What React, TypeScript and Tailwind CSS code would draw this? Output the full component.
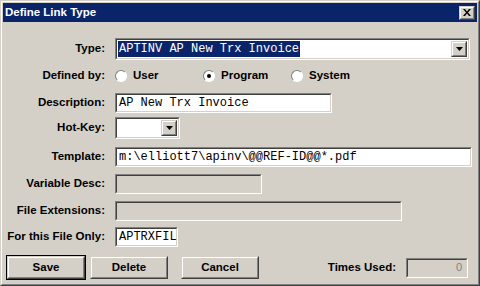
import React from 'react'

const sans = { fontFamily: '"Liberation Sans", Arial, sans-serif' }
const mono = { fontFamily: '"Liberation Mono", "Courier New", monospace' }

// classic 3d edges
const sunkenOuter = 'border border-t-[#808080] border-l-[#808080] border-r-white border-b-white'
const sunkenInner = 'border border-t-[#404040] border-l-[#404040] border-r-[#d4d0c8] border-b-[#d4d0c8]'
const raisedOuter = 'border border-t-[#d4d0c8] border-l-[#d4d0c8] border-r-[#404040] border-b-[#404040]'
const raisedInner = 'border border-t-white border-l-white border-r-[#808080] border-b-[#808080]'

function Field({ width, height = 20, disabled, children, className = '' }: { width: number; height?: number; disabled?: boolean; children?: React.ReactNode; className?: string }) {
  return (
    <div className={sunkenOuter} style={{ width, height }}>
      <div className={`${sunkenInner} h-full flex items-center ${disabled ? 'bg-[#d4d0c8]' : 'bg-white'} ${className}`}>
        {children}
      </div>
    </div>
  )
}

function DropButton() {
  return (
    <div className={`${raisedOuter} w-[16px] h-full shrink-0 bg-[#d4d0c8]`}>
      <div className={`${raisedInner} h-full flex items-center justify-center`}>
        <svg width="7" height="4" viewBox="0 0 7 4"><path d="M0 0h7L3.5 4z" fill="#000" /></svg>
      </div>
    </div>
  )
}

function Label({ children }: { children: React.ReactNode }) {
  return <div className="w-[103px] shrink-0 text-right text-[11.5px] font-bold text-black leading-none pr-px">{children}</div>
}

function Radio({ checked, label }: { checked?: boolean; label: string }) {
  return (
    <div className="flex items-center gap-[6px]">
      <div className="w-[12px] h-[12px] rounded-full bg-white border border-t-[#808080] border-l-[#808080] border-r-white border-b-white flex items-center justify-center">
        {checked && <div className="w-[4px] h-[4px] rounded-full bg-black" />}
      </div>
      <span className="text-[11.5px] font-bold leading-none">{label}</span>
    </div>
  )
}

function Button({ label, isDefault, width = 80 }: { label: string; isDefault?: boolean; width?: number }) {
  return (
    <div className={isDefault ? 'border border-black' : 'border border-transparent'} style={{ width, height: 25 }}>
      <div className={`${raisedOuter} h-full`}>
        <div className={`${raisedInner} h-full flex items-center justify-center text-[11.5px] font-bold`}>{label}</div>
      </div>
    </div>
  )
}

export default function App() {
  return (
    <div className="w-[480px] h-[286px] bg-[#d4d0c8] text-black" style={sans}>
      <div className={`${raisedOuter} h-full`}>
        <div className={`${raisedInner} h-full p-px flex flex-col`}>
          {/* title bar */}
          <div className="h-[19px] bg-[#0a246a] flex items-center justify-between pl-[2px] pr-[2px]">
            <span className="text-white text-[11.5px] font-bold">Define Link Type</span>
            <div className="w-[16px] h-[14px] bg-[#d4d0c8]">
              <div className={`${raisedOuter} h-full`}>
                <div className={`${raisedInner} h-full flex items-center justify-center`}>
                  <svg width="8" height="7" viewBox="0 0 8 7">
                    <path d="M0 0h2l2 2.5L6 0h2L5 3.5 8 7H6L4 4.5 2 7H0l3-3.5z" fill="#000" />
                  </svg>
                </div>
              </div>
            </div>
          </div>

          {/* form */}
          <div className="flex flex-col">
            <div className="flex items-center gap-[9px] mt-[16px] h-[22px]">
              <Label>Type:</Label>
              <div className={`${sunkenOuter} w-[355px] h-[22px]`}>
                <div className={`${sunkenInner} h-full bg-white flex items-stretch p-px`}>
                  <div className="flex-1 flex items-center">
                    <span className="bg-[#0a246a] text-white text-[12px] leading-[16px] px-px" style={mono}>APTINV AP New Trx Invoice</span>
                  </div>
                  <DropButton />
                </div>
              </div>
            </div>

            <div className="flex items-center gap-[9px] mt-[6px] h-[20px]">
              <Label>Defined by:</Label>
              <div className="flex items-center">
                <div className="w-[88px]"><Radio label="User" /></div>
                <div className="w-[88px]"><Radio checked label="Program" /></div>
                <Radio label="System" />
              </div>
            </div>

            <div className="flex items-center gap-[9px] mt-[7px] h-[20px]">
              <Label>Description:</Label>
              <Field width={217}>
                <span className="text-[12px] pl-[2px]" style={mono}>AP New Trx Invoice</span>
              </Field>
            </div>

            <div className="flex items-center gap-[9px] mt-[4px] h-[22px]">
              <Label>Hot-Key:</Label>
              <div className={`${sunkenOuter} w-[65px] h-[22px]`}>
                <div className={`${sunkenInner} h-full bg-white flex justify-end p-px`}>
                  <DropButton />
                </div>
              </div>
            </div>

            <div className="flex items-center gap-[9px] mt-[8px] h-[20px]">
              <Label>Template:</Label>
              <Field width={357}>
                <span className="text-[12px] pl-[2px]" style={mono}>m:\elliott7\apinv\@@REF-ID@@*.pdf</span>
              </Field>
            </div>

            <div className="flex items-center gap-[9px] mt-[7px] h-[20px]">
              <Label>Variable Desc:</Label>
              <Field width={147} disabled />
            </div>

            <div className="flex items-center gap-[9px] mt-[7px] h-[20px]">
              <Label>File Extensions:</Label>
              <Field width={287} disabled />
            </div>

            <div className="flex items-center gap-[9px] mt-[6px] h-[20px]">
              <Label>For this File Only:</Label>
              <Field width={63}>
                <span className="text-[12px] pl-[2px]" style={mono}>APTRXFIL</span>
              </Field>
            </div>

            <div className="flex items-center mt-[8px] pl-[3px] h-[25px]">
              <Button label="Save" isDefault />
              <div className="ml-[3px]"><Button label="Delete" /></div>
              <div className="ml-[11px]"><Button label="Cancel" /></div>
              <div className="flex-1 text-right text-[11.5px] font-bold pr-[10px]">Times Used:</div>
              <Field width={62} disabled className="justify-end pr-[4px]">
                <span className="text-[11px] text-[#808080]">0</span>
              </Field>
              <div className="w-[9px]" />
            </div>
          </div>
        </div>
      </div>
    </div>
  )
}
